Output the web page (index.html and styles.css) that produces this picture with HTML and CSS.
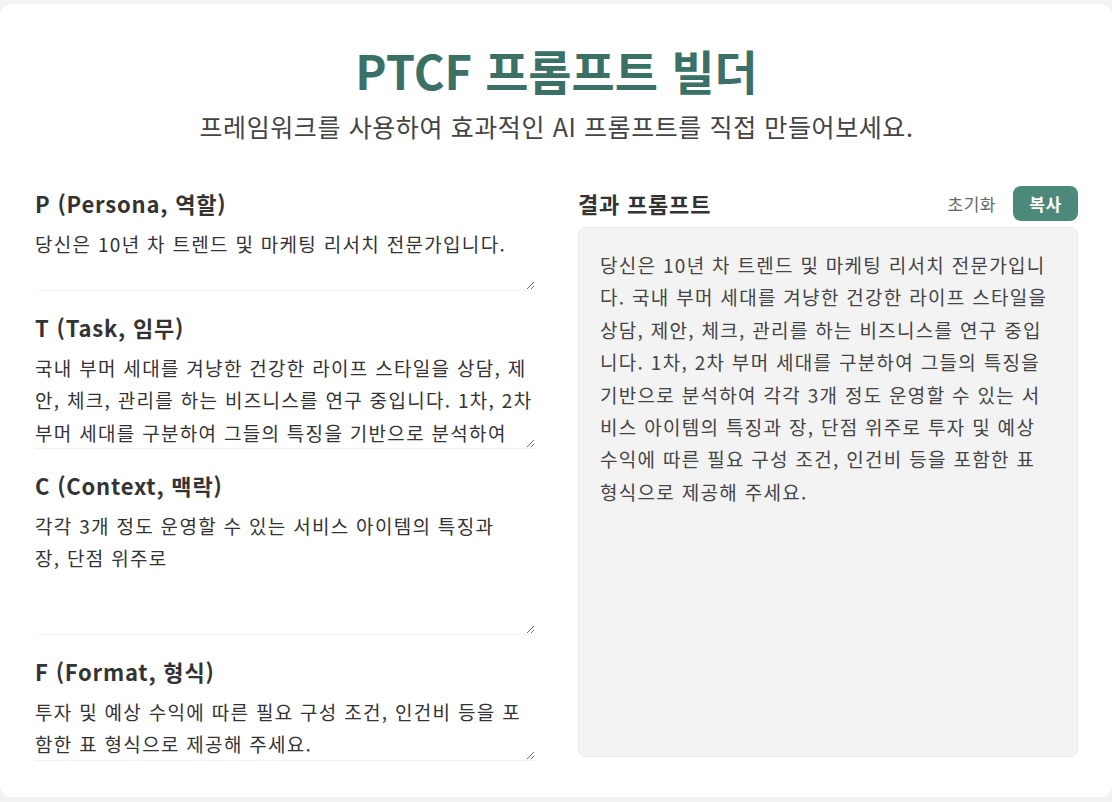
FILE: index.html
```html
<!DOCTYPE html>
<html lang="ko">
<head>
<meta charset="utf-8">
<title>PTCF 프롬프트 빌더</title>
<link rel="stylesheet" href="styles.css">
</head>
<body>
<main class="card">
  <header class="hero">
    <h1 class="title">PTCF 프롬프트 빌더</h1>
    <p class="subtitle">프레임워크를 사용하여 효과적인 AI 프롬프트를 직접 만들어보세요.</p>
  </header>
  <div class="columns">
    <section class="inputs">
      <div class="field">
        <label class="label" for="p">P (Persona, 역할)</label>
        <textarea id="p" class="ta ta-p" spellcheck="false">당신은 10년 차 트렌드 및 마케팅 리서치 전문가입니다.</textarea>
      </div>
      <div class="field">
        <label class="label" for="t">T (Task, 임무)</label>
        <textarea id="t" class="ta ta-t" spellcheck="false">국내 부머 세대를 겨냥한 건강한 라이프 스타일을 상담, 제안, 체크, 관리를 하는 비즈니스를 연구 중입니다. 1차, 2차 부머 세대를 구분하여 그들의 특징을 기반으로 분석하여</textarea>
      </div>
      <div class="field">
        <label class="label" for="c">C (Context, 맥락)</label>
        <textarea id="c" class="ta ta-c" spellcheck="false">각각 3개 정도 운영할 수 있는 서비스 아이템의 특징과
장, 단점 위주로</textarea>
      </div>
      <div class="field">
        <label class="label" for="f">F (Format, 형식)</label>
        <textarea id="f" class="ta ta-f" spellcheck="false">투자 및 예상 수익에 따른 필요 구성 조건, 인건비 등을 포함한 표 형식으로 제공해 주세요.</textarea>
      </div>
    </section>
    <section class="result">
      <div class="result-head">
        <h2 class="label">결과 프롬프트</h2>
        <div class="actions">
          <button class="btn-reset" type="button">초기화</button>
          <button class="btn-copy" type="button">복사</button>
        </div>
      </div>
      <div class="output">당신은 10년 차 트렌드 및 마케팅 리서치 전문가입니다. 국내 부머 세대를 겨냥한 건강한 라이프 스타일을 상담, 제안, 체크, 관리를 하는 비즈니스를 연구 중입니다. 1차, 2차 부머 세대를 구분하여 그들의 특징을 기반으로 분석하여 각각 3개 정도 운영할 수 있는 서비스 아이템의 특징과 장, 단점 위주로 투자 및 예상 수익에 따른 필요 구성 조건, 인건비 등을 포함한 표 형식으로 제공해 주세요.</div>
    </section>
  </div>
</main>
</body>
</html>
```

FILE: styles.css
```css
* { box-sizing: border-box; }

html, body {
  margin: 0;
  padding: 0;
  background: #f3f3f3;
  font-family: "Noto Sans CJK KR", "Noto Sans", sans-serif;
  color: #333;
}

.card {
  margin-top: 4px;
  height: 793px;
  background: #ffffff;
  border-radius: 12px;
  padding: 36px 34px 0 35px;
}

.hero {
  text-align: center;
}

.title {
  margin: 0;
  font-size: 47px;
  line-height: 60px;
  font-weight: 700;
  color: #3b7066;
}

.subtitle {
  margin: 10px 0 0;
  font-size: 25px;
  line-height: 33px;
  letter-spacing: 0.6px;
  color: #444;
}

.columns {
  display: grid;
  grid-template-columns: 500px 500px;
  column-gap: 43px;
  margin-top: 45px;
}

.inputs {
  display: flex;
  flex-direction: column;
  gap: 22px;
}

.field {
  display: flex;
  flex-direction: column;
}

.label {
  margin: 0 0 9px;
  font-size: 22px;
  line-height: 31px;
  letter-spacing: 0.8px;
  font-weight: 700;
  color: #333;
}

.ta {
  display: block;
  width: 500px;
  border: none;
  outline: none;
  padding: 0;
  margin: 0;
  font-family: inherit;
  font-size: 19px;
  line-height: 32.4px;
  letter-spacing: 1.3px;
  color: #333;
  background: #fff;
  resize: vertical;
  overflow: hidden;
  box-shadow: 0 1px 0 #f2f2f2;
}

.ta-p { height: 62px; }
.ta-t { height: 96px; }
.ta-c { height: 124px; }
.ta-f { height: 64px; }

.result {
  display: flex;
  flex-direction: column;
}

.result-head {
  display: flex;
  align-items: center;
  justify-content: space-between;
  height: 35px;
  margin: -2px 0 6px;
}

.result-head .label {
  margin: 0;
}

.actions {
  display: flex;
  align-items: center;
  gap: 17px;
}

.btn-reset {
  border: none;
  background: none;
  padding: 0;
  font-family: inherit;
  font-size: 17px;
  letter-spacing: 0.5px;
  color: #666;
}

.btn-copy {
  border: none;
  background: #4d897a;
  color: #fff;
  font-family: inherit;
  font-size: 17px;
  letter-spacing: 0.5px;
  font-weight: 700;
  border-radius: 8px;
  width: 65px;
  height: 35px;
  padding: 0;
}

.output {
  height: 530px;
  background: #f3f3f3;
  border: 1px solid #e9e9e9;
  border-radius: 8px;
  padding: 21px 20px 20px 21px;
  font-size: 19px;
  line-height: 32.4px;
  letter-spacing: 1.3px;
  color: #444;
}
```
